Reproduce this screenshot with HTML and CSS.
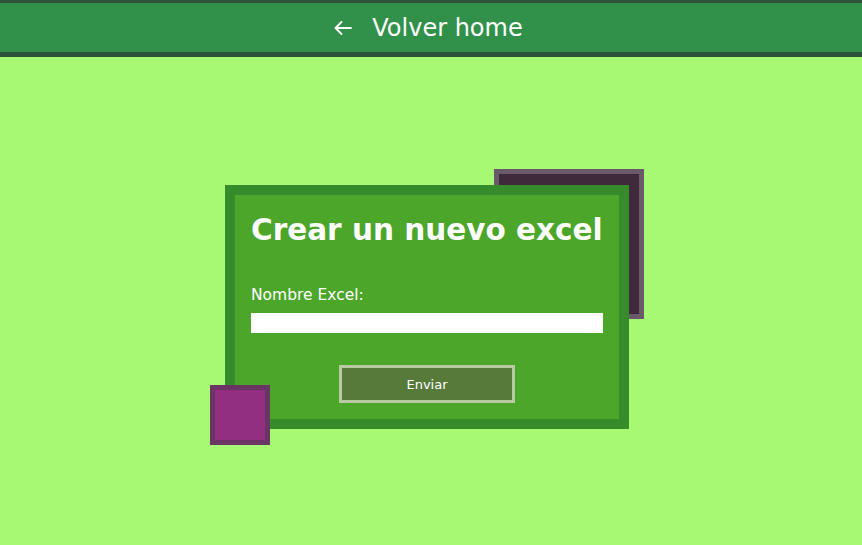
FILE: index.html
```html
<!DOCTYPE html>
<html lang="es">
<head>
<meta charset="utf-8">
<title>Crear excel</title>
<link rel="stylesheet" href="styles.css">
</head>
<body>
<header class="topbar">
  <a class="back" href="#">
    <svg class="back-icon" width="18" height="14" viewBox="0 0 18 14" fill="none" stroke="#fff" stroke-width="1.8" stroke-linecap="round" stroke-linejoin="round"><path d="M17 7H1.5M7.5 1L1.5 7l6 6"/></svg>
    <span>Volver home</span>
  </a>
</header>
<main class="stage">
  <div class="card-wrap">
    <span class="deco deco-dark"></span>
    <form class="card">
      <h1 class="title">Crear un nuevo excel</h1>
      <label class="label" for="nombre">Nombre Excel:</label>
      <input class="input" id="nombre" type="text">
      <div class="actions">
        <button class="btn" type="button">Enviar</button>
      </div>
    </form>
    <span class="deco deco-purple"></span>
  </div>
</main>
</body>
</html>
```
FILE: styles.css
```css
* { box-sizing: border-box; }
html, body { margin: 0; height: 100%; }
body {
  background: #a7f974;
  font-family: "DejaVu Sans", "Open Sans", sans-serif;
  color: #fff;
  display: flex;
  flex-direction: column;
}
.topbar {
  height: 57px;
  background: #31914a;
  border-top: 3px solid #2d5239;
  border-bottom: 5px solid #2d5239;
  display: flex;
  align-items: center;
  justify-content: center;
}
.back {
  display: flex;
  align-items: center;
  gap: 20px;
  color: #fff;
  text-decoration: none;
  font-size: 24px;
  margin-right: 5px;
}
.stage {
  flex: 1;
  display: flex;
  align-items: center;
  justify-content: center;
  padding-right: 8px;
  padding-top: 12px;
}
.card-wrap { position: relative; }
.card {
  position: relative;
  z-index: 1;
  width: 404px;
  background: #4ba62a;
  border: 10px solid #368b2a;
  padding: 15px 16px 16px;
  display: flex;
  flex-direction: column;
}
.title {
  margin: 0;
  font-size: 29.5px;
  line-height: 40px;
  font-weight: bold;
  white-space: nowrap;
}
.label {
  margin-top: 35px;
  font-size: 15.5px;
  line-height: 20px;
}
.input {
  margin-top: 8px;
  height: 20px;
  border: none;
  background: #fff;
  width: 100%;
}
.actions {
  margin-top: 32px;
  display: flex;
  justify-content: center;
}
.btn {
  width: 176px;
  height: 38px;
  background: #577a3b;
  border: 3px solid #b7caa1;
  color: #fff;
  font-family: inherit;
  font-size: 13px;
}
.deco { position: absolute; display: block; }
.deco-dark {
  left: 269px;
  top: -16px;
  width: 150px;
  height: 150px;
  background: #3e2a3b;
  border: 5px solid #6a5a69;
  z-index: 0;
}
.deco-purple {
  left: -15px;
  top: 200px;
  width: 60px;
  height: 60px;
  background: #922f80;
  border: 5px solid #6a3465;
  z-index: 2;
}
```
